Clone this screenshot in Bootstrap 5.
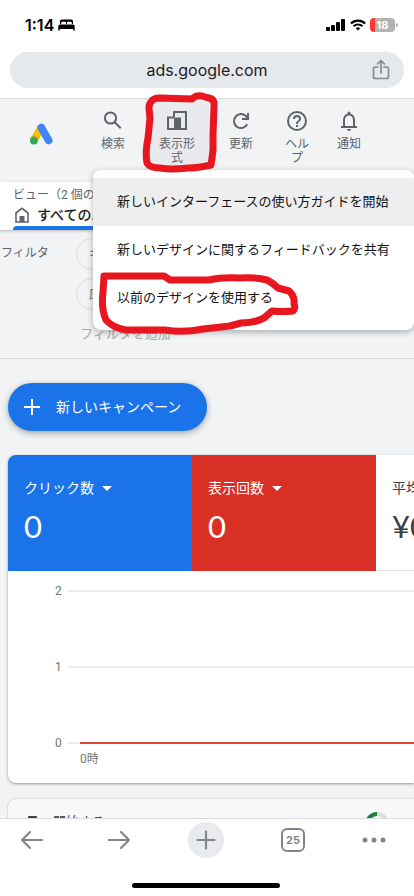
<!DOCTYPE html>
<html lang="ja">
<head>
<meta charset="utf-8">
<meta name="viewport" content="width=device-width, initial-scale=1">
<title>ads.google.com</title>
<link href="https://cdn.jsdelivr.net/npm/bootstrap@5.3.0/dist/css/bootstrap.min.css" rel="stylesheet">
<style>
body { font-family: Roboto, "Noto Sans CJK JP", sans-serif; font-size: 13px; line-height: 20px; color: #3c4043; background: #fff; }
svg { display: block; flex: none; }
button { font-family: inherit; }
.screen { height: 100vh; }
.ios { font-family: Inter, sans-serif; }
.status-bar { padding: 14px 16px 16px 25px; height: 52px; }
.clock { font-size: 16px; line-height: 22px; font-weight: 600; color: #000; }
.battery { background: linear-gradient(90deg, #ff3b30 5px, #b3b3b3 5px); color: #fff; font-size: 11px; line-height: 14px; width: 25px; border-radius: 4px; font-weight: 700; }
.battery-tip { width: 2px; height: 4px; background: #b3b3b3; border-radius: 0 2px 2px 0; margin-left: 1px; }
.address { margin: 0 10px 10px; height: 36px; background: #e6e9ec; padding: 0 13px 0 33px; }
.address-text { font-size: 16px; color: #1f2124; }
.page { background: #f1f3f4; border-top: 1px solid #d9dbdd; min-height: 0; }
.tools { padding: 0 37px 13px 30px; }
.tool { border: 0; background: transparent; height: 70px; width: 64px; padding: 10px 12px 0; font-size: 12px; line-height: 14px; color: #5f6368; }
.tool svg { margin-bottom: 4px; }
.tool-on { background: #e8eaed; }
.tool-help { width: 48px; }
.tool-bell { width: 56px; }
.view-card { width: 240px; height: 48px; box-shadow: 0 1px 3px rgba(60,64,67,.35); border-radius: 0 4px 4px 0; padding: 3px 0 0 13px; }
.view-kind { font-size: 12px; color: #5f6368; }
.view-name { font-size: 14px; color: #202124; font-weight: 500; padding-left: 2px; }
.view-line { height: 4px; background: #1a73e8; border-radius: 4px 0 0 0; }
.filters { padding: 8px 0 14px 1px; border-bottom: 1px solid #dadce0; color: #5f6368; }
.filter-label { width: 75px; font-size: 12px; line-height: 30px; }
.chip { height: 32px; border: 1px solid #dadce0; background: transparent; color: #5f6368; font-size: 13px; width: 160px; padding: 0 12px; }
.add-filter { margin-left: 79px; margin-top: 14px; font-size: 13px; color: #a5a8ac; background: transparent; }
.new-campaign { margin: 24px 8px; height: 48px; padding: 0 26px 0 16px; background: #1a73e8; color: #fff; font-size: 14px; gap: 16px; box-shadow: 0 2px 6px rgba(60,64,67,.45); }
.panel { margin-left: 8px; border-radius: 8px 0 0 8px; box-shadow: 0 1px 3px rgba(60,64,67,.5); }
.panel-next { margin-top: 16px; background: #f8f9fa; padding: 13px 25px 0 20px; box-shadow: 0 0 2px rgba(60,64,67,.4); height: 60px; }
.metric { width: 184px; height: 116px; padding: 23px 16px 0; border: 0; font-size: 14px; line-height: 20px; color: #3c4043; }
.metric-value { font-family: Lato, sans-serif; font-size: 31px; line-height: 36px; margin-top: 10px; }
.blue { background: #1a73e8; color: #fff; }
.red { background: #d93025; color: #fff; }
.chart { padding: 12px 0 16px 47px; font-size: 12px; line-height: 16px; color: #757575; }
.chart-row { margin-bottom: 60px; gap: 6px; }
.chart-row-last { margin-bottom: 0; }
.chart-num { width: 7px; }
.grid-line { height: 2px; background: #ebebeb; }
.zero-line { background: linear-gradient(90deg, #ebebeb 12px, #db4437 12px); }
.hour { margin-left: 25px; }
.action-menu { top: 170px; left: 93px; right: 0; padding: 8px 0; background: #fff; border-radius: 8px; box-shadow: 0 2px 6px rgba(60,64,67,.4); }
.action-item { border: 0; background: transparent; height: 48px; padding: 0 24px; font-size: 13px; color: #111214; }
.action-item.chosen { background: #eee; }
.ink { top: 0; left: 0; pointer-events: none; }
.bottom-bar { height: 78px; border-top: 1px solid #dadce0; padding: 3px 16px 0 14px; }
.nav-btn { width: 36px; height: 36px; border: 0; background: transparent; color: #80868b; padding: 0; }
.nav-plus { background: #e8eaed; }
.tab-count { width: 24px; height: 24px; border: 2px solid #80868b; border-radius: 6px; font-size: 11px; line-height: 20px; font-weight: 700; }
.home-bar { width: 148px; height: 5px; background: #000; margin-top: 25px; }
</style>
</head>
<body>
<div class="screen d-flex flex-column position-relative overflow-hidden">
  <header class="ios flex-shrink-0">
    <div class="status-bar d-flex align-items-center">
      <span class="clock">1:14</span>
      <svg class="ms-1" width="17" height="12" viewBox="0 0 17 12"><path d="M2 5V2.200Q2 .5 3.700.5h9.600Q15 .5 15 2.200V5h-1.200V4q0-1.200-1.200-1.200H10Q9 2.800 9 3.800V5H8V3.800q0-1-1-1H4.400Q3.200 2.800 3.200 4v1zM.3 7.300Q.3 5.500 2 5.500h13q1.700 0 1.700 1.800v4.200h-1.500V10H1.800v1.500H.3z"/></svg>
      <div class="d-flex align-items-center ms-auto">
        <svg width="20" height="12" viewBox="0 0 20 12"><rect x="0" y="8" width="4" height="4" rx="1"/><rect x="5" y="6" width="4" height="6" rx="1"/><rect x="10" y="3" width="4" height="9" rx="1"/><rect x="15" y="0" width="4" height="12" rx="1"/></svg>
        <svg class="ms-1 me-1" width="16" height="12" viewBox="0 0 16 12" fill="none" stroke="#000" stroke-width="2.200"><path d="M.9 4.500a10.200 10.200 0 0 1 14.200 0M3.600 7.300a6.300 6.300 0 0 1 8.800 0"/><path d="M5.700 9.300a3.400 3.400 0 0 1 4.600 0L8 11.600z" fill="#000" stroke="none"/></svg>
        <span class="battery text-center">18</span><span class="battery-tip"></span>
      </div>
    </div>
    <div class="address rounded-pill d-flex align-items-center">
      <span class="address-text flex-grow-1 text-center">ads.google.com</span>
      <svg width="20" height="22" viewBox="0 0 20 22" fill="none" stroke="#868b90" stroke-width="1.700" stroke-linecap="round" stroke-linejoin="round"><path d="M7 8H4.500Q2.500 8 2.500 10v7.500q0 2 2 2h11q2 0 2-2V10q0-2-2-2H13M10 14V2M6.500 5 10 1.500 13.500 5"/></svg>
    </div>
  </header>

  <main class="page flex-grow-1 overflow-hidden">
    <div class="tools d-flex">
      <svg class="me-auto mt-4" width="23" height="22" viewBox="0 0 23 22"><path d="M3.800 17.500 11.500 4" stroke="#fbbc04" stroke-width="7.600"/><path d="M11.300 4.500 18.700 17.500" stroke="#4285f4" stroke-width="7.600" stroke-linecap="round"/><circle cx="3.900" cy="17.500" r="3.900" fill="#34a853"/></svg>
      <button type="button" class="tool d-flex flex-column align-items-center"><svg width="24" height="24" viewBox="0 0 24 24" fill="none" stroke="#5f6368" stroke-width="2"><circle cx="9.500" cy="9" r="5.600"/><path d="m13.700 13.200 6 6"/></svg>検索</button>
      <button type="button" class="tool tool-on d-flex flex-column align-items-center"><svg width="24" height="24" viewBox="0 0 24 24" fill="none" stroke="#5f6368" stroke-width="2"><path d="M9 8V3h12v17H3V8.500h6"/><path d="M9 8.500h7V20H9z" fill="#5f6368" stroke="none"/></svg>表示形式</button>
      <button type="button" class="tool d-flex flex-column align-items-center"><svg width="24" height="24" viewBox="0 0 24 24" fill="none" stroke="#5f6368" stroke-width="2"><path d="M18.200 15.300A7 7 0 1 1 16.800 7L19 9.200"/><path d="M19 4v6h-6" /></svg>更新</button>
      <button type="button" class="tool tool-help d-flex flex-column align-items-center"><svg width="24" height="24" viewBox="0 0 24 24" fill="#5f6368"><path d="M11 18h2v-2h-2zm1-16a10 10 0 1 0 0 20 10 10 0 0 0 0-20m0 18a8 8 0 1 1 0-16 8 8 0 0 1 0 16m0-14a4 4 0 0 0-4 4h2a2 2 0 1 1 4 0c0 2-3 1.750-3 5h2c0-2.250 3-2.500 3-5a4 4 0 0 0-4-4"/></svg>ヘルプ</button>
      <button type="button" class="tool tool-bell d-flex flex-column align-items-center"><svg width="24" height="24" viewBox="0 0 24 24" fill="#5f6368"><path d="M12 22a2 2 0 0 0 2-2h-4a2 2 0 0 0 2 2m6-5v-6c0-3.070-1.630-5.640-4.500-6.320V4a1.500 1.500 0 0 0-3 0v.68C7.640 5.360 6 7.920 6 11v6H4v2h16v-2zm-2 0H8v-6c0-2.480 1.510-4.500 4-4.500s4 2.020 4 4.500z"/></svg>通知</button>
    </div>

    <div class="view-card bg-white d-flex flex-column text-nowrap overflow-hidden">
      <div class="view-kind">ビュー（2 個のビュー）</div>
      <div class="view-name d-flex align-items-center gap-2"><svg width="14" height="16" viewBox="0 0 14 16"><path d="M1 15V6l6-4.700L13 6v9z" fill="none" stroke="#5f6368" stroke-width="1.600"/><path d="M4.500 15V9h5v6z" fill="#5f6368"/></svg>すべての...</div>
      <div class="view-line mt-auto"></div>
    </div>

    <section class="filters">
      <div class="d-flex">
        <div class="filter-label">フィルタ</div>
        <div class="d-flex flex-column gap-2">
          <button type="button" class="chip rounded-pill text-start">キャンペーン</button>
          <button type="button" class="chip rounded-pill text-start">広告グループ</button>
        </div>
      </div>
      <button type="button" class="add-filter border-0 p-0 d-block">フィルタを追加</button>
    </section>

    <button type="button" class="new-campaign border-0 rounded-pill d-flex align-items-center">
      <svg width="16" height="16" viewBox="0 0 16 16" stroke="#fff" stroke-width="2"><path d="M8 0v16M0 8h16"/></svg><span>新しいキャンペーン</span>
    </button>

    <section class="panel bg-white overflow-hidden">
      <div class="d-flex text-nowrap">
        <button type="button" class="metric blue text-start flex-shrink-0 d-flex flex-column"><span class="d-flex align-items-center gap-2">クリック数<svg width="10" height="5" viewBox="0 0 10 5" fill="#fff"><path d="M0 0h10L5 5z"/></svg></span><span class="metric-value">0</span></button>
        <button type="button" class="metric red text-start flex-shrink-0 d-flex flex-column"><span class="d-flex align-items-center gap-2">表示回数<svg width="10" height="5" viewBox="0 0 10 5" fill="#fff"><path d="M0 0h10L5 5z"/></svg></span><span class="metric-value">0</span></button>
        <button type="button" class="metric bg-white border-bottom text-start flex-shrink-0 d-flex flex-column"><span>平均クリック単価</span><span class="metric-value">¥0</span></button>
      </div>
      <div class="chart">
        <div class="chart-row d-flex align-items-center"><span class="chart-num">2</span><span class="grid-line flex-grow-1"></span></div>
        <div class="chart-row d-flex align-items-center"><span class="chart-num">1</span><span class="grid-line flex-grow-1"></span></div>
        <div class="chart-row chart-row-last d-flex align-items-center"><span class="chart-num">0</span><span class="grid-line zero-line flex-grow-1"></span></div>
        <div class="hour">0時</div>
      </div>
    </section>

    <section class="panel panel-next d-flex justify-content-between">
      <div class="d-flex gap-3"><svg class="mt-1" width="9" height="12"><rect width="9" height="12" rx="1" fill="#3c4043"/></svg><span>開始する</span></div>
      <svg width="24" height="24" viewBox="0 0 24 24" fill="none" stroke-width="4"><circle cx="12" cy="12" r="10" stroke="#dadce0"/><path d="M2 12A10 10 0 0 1 12 2" stroke="#188038"/></svg>
    </section>
  </main>

  <div class="action-menu position-absolute d-flex flex-column">
    <button type="button" class="action-item chosen text-start text-nowrap">新しいインターフェースの使い方ガイドを開始</button>
    <button type="button" class="action-item text-start text-nowrap">新しいデザインに関するフィードバックを共有</button>
    <button type="button" class="action-item text-start text-nowrap">以前のデザインを使用する</button>
  </div>

  <svg class="ink position-absolute" width="414" height="360" viewBox="0 0 414 360" fill="none" stroke="#e8171f" stroke-width="7" stroke-linejoin="round" stroke-linecap="round">
    <path d="M151 102Q153 98 160 98L192 99Q196 95 202 96Q205 97 209 98Q215 99 214 106L213 135 213 150 212 158 211 165Q198 168 188 168Q170 170 160 168Q150 168 147 163Q145 152 148 138L150 118 149 108Q149 104 151 102Z"/>
    <path d="M104 276 164 276 170 280 209 280Q222 277 240 278 256 277 267 280 273 283 278 288L289 291Q295 296 294 304 296 308 293 311 283 312 272 311L264 318Q254 323 241 323L230 326 203 329Q183 333 165 330L126 330Q113 328 106 320 101 309 103 292Z"/>
  </svg>

  <footer class="bottom-bar ios bg-white position-relative flex-shrink-0">
    <nav class="d-flex justify-content-between">
      <button type="button" class="nav-btn d-flex align-items-center justify-content-center" aria-label="戻る"><svg width="24" height="20" viewBox="0 0 24 20" fill="none" stroke="currentColor" stroke-width="2.200" stroke-linecap="round" stroke-linejoin="round"><path d="M22 10H2M10 2 2 10l8 8"/></svg></button>
      <button type="button" class="nav-btn d-flex align-items-center justify-content-center" aria-label="進む"><svg width="24" height="20" viewBox="0 0 24 20" fill="none" stroke="currentColor" stroke-width="2.200" stroke-linecap="round" stroke-linejoin="round"><path d="M2 10h20M14 2l8 8-8 8"/></svg></button>
      <button type="button" class="nav-btn nav-plus rounded-circle d-flex align-items-center justify-content-center" aria-label="新しいタブ"><svg width="20" height="20" viewBox="0 0 20 20" stroke="currentColor" stroke-width="2.200" stroke-linecap="round"><path d="M10 1.500v17M1.500 10h17"/></svg></button>
      <button type="button" class="nav-btn d-flex align-items-center justify-content-center"><span class="tab-count">25</span></button>
      <button type="button" class="nav-btn d-flex align-items-center" aria-label="メニュー"><svg width="24" height="6" viewBox="0 0 24 6" fill="currentColor"><circle cx="3" cy="3" r="2.500"/><circle cx="12" cy="3" r="2.500"/><circle cx="21" cy="3" r="2.500"/></svg></button>
    </nav>
    <div class="home-bar rounded-pill mx-auto"></div>
  </footer>
</div>
<script src="https://cdn.jsdelivr.net/npm/bootstrap@5.3.0/dist/js/bootstrap.bundle.min.js"></script>
</body>
</html>
